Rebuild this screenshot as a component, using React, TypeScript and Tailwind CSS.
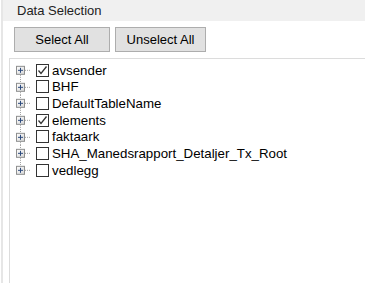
import React from 'react'

type Node = { name: string; checked: boolean }

const nodes: Node[] = [
  { name: 'avsender', checked: true },
  { name: 'BHF', checked: false },
  { name: 'DefaultTableName', checked: false },
  { name: 'elements', checked: true },
  { name: 'faktaark', checked: false },
  { name: 'SHA_Manedsrapport_Detaljer_Tx_Root', checked: false },
  { name: 'vedlegg', checked: false },
]

const ROW_H = 16.67

// plus box + dotted connectors for one tree row
function Expander({ first, last }: { first: boolean; last: boolean }) {
  const mid = ROW_H / 2
  return (
    <svg width="20" height={ROW_H} viewBox={`0 0 20 ${ROW_H}`} className="shrink-0 overflow-visible">
      {!first && (
        <line x1="4.5" y1="0" x2="4.5" y2={mid - 4.5} stroke="#a0a0a0" strokeDasharray="1 1" />
      )}
      {!last && (
        <line x1="4.5" y1={mid + 4.5} x2="4.5" y2={ROW_H} stroke="#a0a0a0" strokeDasharray="1 1" />
      )}
      <line x1="9" y1={mid} x2="15" y2={mid} stroke="#a0a0a0" strokeDasharray="1 1" />
      <defs>
        <linearGradient id="pb" x1="0" y1="0" x2="1" y2="1">
          <stop offset="0" stopColor="#ffffff" />
          <stop offset="1" stopColor="#d6d6d6" />
        </linearGradient>
      </defs>
      <rect x="0.5" y={mid - 4} width="8" height="8" fill="url(#pb)" stroke="#8e8f8f" />
      <line x1="2" y1={mid} x2="7" y2={mid} stroke="#2c4a7c" />
      <line x1="4.5" y1={mid - 2.5} x2="4.5" y2={mid + 2.5} stroke="#2c4a7c" />
    </svg>
  )
}

function Check({ checked }: { checked: boolean }) {
  return (
    <span className="flex h-[13px] w-[13px] shrink-0 items-center justify-center border border-[#333333] bg-white">
      {checked && (
        <svg width="11" height="11" viewBox="0 0 11 11">
          <path d="M1.5 5.5 L4 8.5 L9.5 1.5" fill="none" stroke="#333333" strokeWidth="1.3" />
        </svg>
      )}
    </span>
  )
}

export default function App() {
  return (
    <div className="flex h-[283px] w-[365px] overflow-hidden bg-white font-['Liberation_Sans',Arial,sans-serif] text-black">
      <div className="ml-[1px] w-[2px] shrink-0 bg-[#e6e6e6]" />
      <div className="flex min-w-0 flex-1 flex-col">
        <div className="h-[21px] bg-[#f0f0f0] pl-[14px] text-[13px] leading-[21px] text-[#222222]">
          Data Selection
        </div>
        <div className="flex gap-[5px] pl-[11px] pt-[6px]">
          <button
            type="button"
            className="h-[25px] w-[96px] border border-[#adadad] bg-[#e1e1e1] text-[13px] leading-none"
          >
            Select All
          </button>
          <button
            type="button"
            className="h-[25px] w-[91px] border border-[#adadad] bg-[#e1e1e1] text-[13px] leading-none"
          >
            Unselect All
          </button>
        </div>
        <div className="ml-[6px] mt-[6px] flex-1 border-l border-t border-[#dcdcdc] pt-[3px]">
          {nodes.map((n, i) => (
            <div key={n.name} className="flex h-[16.67px] items-center pl-[6px]">
              <Expander first={i === 0} last={i === nodes.length - 1} />
              <Check checked={n.checked} />
              <span className="ml-[3px] whitespace-nowrap text-[13.3px] leading-none">{n.name}</span>
            </div>
          ))}
        </div>
      </div>
    </div>
  )
}
